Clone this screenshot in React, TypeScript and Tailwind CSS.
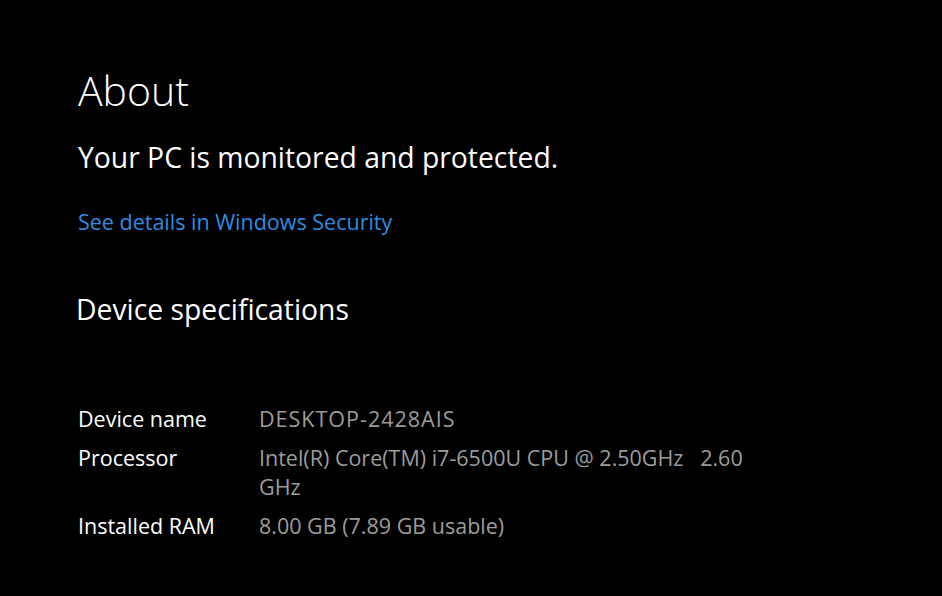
import React from "react";

const specs: { label: string; value: string; extra?: string }[] = [
  { label: "Device name", value: "DESKTOP-2428AIS", extra: "tracking-[1px]" },
  { label: "Processor", value: "Intel(R) Core(TM) i7-6500U CPU @ 2.50GHz\u00a0\u00a0\u00a02.60 GHz" },
  { label: "Installed RAM", value: "8.00 GB (7.89 GB usable)" },
];

export default function App() {
  return (
    <div
      className="w-[942px] h-[596px] bg-black text-white overflow-hidden pl-[78px] pt-[62px]"
      style={{ fontFamily: '"Open Sans", "Noto Sans", sans-serif' }}
    >
      <h1 className="text-[41px] leading-[56px] font-light">About</h1>
      <p className="mt-[20px] text-[28.3px] leading-[38px]">Your PC is monitored and protected.</p>
      <a className="block mt-[31px] text-[21.5px] leading-[30px] text-[#2d8ce0]">See details in Windows Security</a>
      <h2 className="mt-[53px] -ml-[2px] text-[28.3px] leading-[38px]">Device specifications</h2>
      <div className="mt-[76px] flex flex-col gap-[10px]">
        {specs.map((s) => (
          <div key={s.label} className="flex text-[21.5px] leading-[29px]">
            <div className="w-[181px] shrink-0">{s.label}</div>
            <div className={`w-[500px] text-[#9c9c9c] ${s.extra ?? ""}`}>{s.value}</div>
          </div>
        ))}
      </div>
    </div>
  );
}
